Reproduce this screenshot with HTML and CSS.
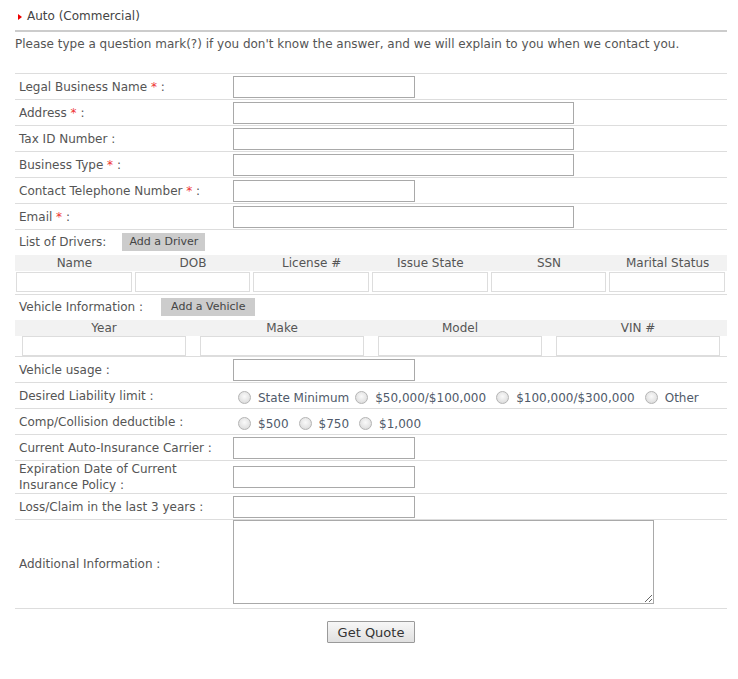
FILE: index.html
```html
<!DOCTYPE html>
<html lang="en">
<head>
<meta charset="utf-8">
<title>Auto (Commercial)</title>
<link rel="stylesheet" href="styles.css">
</head>
<body>
<div class="page">
  <div class="title"><span class="arrow"></span>Auto (Commercial)</div>
  <p class="note">Please type a question mark(?) if you don't know the answer, and we will explain to you when we contact you.</p>
  <form class="form">
    <div class="row"><div class="label">Legal Business Name <span class="req">*</span> :</div><div class="field"><input class="in short" type="text"></div></div>
    <div class="row"><div class="label">Address <span class="req">*</span> :</div><div class="field"><input class="in long" type="text"></div></div>
    <div class="row"><div class="label">Tax ID Number :</div><div class="field"><input class="in long" type="text"></div></div>
    <div class="row"><div class="label">Business Type <span class="req">*</span> :</div><div class="field"><input class="in long" type="text"></div></div>
    <div class="row"><div class="label">Contact Telephone Number <span class="req">*</span> :</div><div class="field"><input class="in short" type="text"></div></div>
    <div class="row"><div class="label">Email <span class="req">*</span> :</div><div class="field"><input class="in long" type="text"></div></div>

    <div class="block drivers">
      <div class="block-head"><span>List of Drivers:</span><button type="button" class="add">Add a Driver</button></div>
      <div class="thead six"><div>Name</div><div>DOB</div><div>License #</div><div>Issue State</div><div>SSN</div><div>Marital Status</div></div>
      <div class="tin six"><input type="text"><input type="text"><input type="text"><input type="text"><input type="text"><input type="text"></div>
    </div>

    <div class="block vehicles">
      <div class="block-head"><span>Vehicle Information :</span><button type="button" class="add wide">Add a Vehicle</button></div>
      <div class="thead four"><div>Year</div><div>Make</div><div>Model</div><div>VIN #</div></div>
      <div class="tin four"><input type="text"><input type="text"><input type="text"><input type="text"></div>
    </div>

    <div class="row"><div class="label">Vehicle usage :</div><div class="field"><input class="in short" type="text"></div></div>
    <div class="row"><div class="label">Desired Liability limit :</div>
      <div class="field radios">
        <label class="opt"><input type="radio" name="liab">State Minimum</label>
        <label class="opt tight"><input type="radio" name="liab">$50,000/$100,000</label>
        <label class="opt"><input type="radio" name="liab">$100,000/$300,000</label>
        <label class="opt"><input type="radio" name="liab">Other</label>
      </div>
    </div>
    <div class="row"><div class="label">Comp/Collision deductible :</div>
      <div class="field radios">
        <label class="opt"><input type="radio" name="ded">$500</label>
        <label class="opt"><input type="radio" name="ded">$750</label>
        <label class="opt"><input type="radio" name="ded">$1,000</label>
      </div>
    </div>
    <div class="row"><div class="label">Current Auto-Insurance Carrier :</div><div class="field"><input class="in short" type="text"></div></div>
    <div class="row"><div class="label">Expiration Date of Current Insurance Policy :</div><div class="field"><input class="in short" type="text"></div></div>
    <div class="row"><div class="label">Loss/Claim in the last 3 years :</div><div class="field"><input class="in short" type="text"></div></div>
    <div class="row"><div class="label">Additional Information :</div><div class="field"><textarea class="ta"></textarea></div></div>

    <div class="actions"><button type="button" class="submit">Get Quote</button></div>
  </form>
</div>
</body>
</html>
```

FILE: styles.css
```css
body {
  margin: 0;
  background: #fff;
  font-family: "DejaVu Sans", Verdana, sans-serif;
  font-size: 12px;
  color: #555;
}

.page {
  width: 712px;
  margin-left: 15px;
}

.title {
  display: flex;
  align-items: center;
  padding: 8px 0 6px;
  line-height: 16px;
  color: #444;
  border-bottom: 2px solid #ccc;
}

.arrow {
  width: 0;
  height: 0;
  border-left: 4px solid #e00;
  border-top: 3px solid transparent;
  border-bottom: 3px solid transparent;
  margin: 1px 5px 0 3px;
}

.note {
  margin: 4px 0 21px;
  line-height: 16px;
}

.form {
  margin: 0;
  border-top: 1px solid #ddd;
}

.row {
  display: flex;
  align-items: center;
  min-height: 25px;
  border-bottom: 1px solid #ddd;
}

.label {
  flex: none;
  width: 214px;
  padding-left: 4px;
  line-height: 16px;
}

.req {
  color: #e33;
}

.field {
  flex: 1;
  min-width: 0;
}

.in {
  display: block;
  box-sizing: border-box;
  height: 22px;
  margin: 0;
  padding: 1px 3px;
  border: 1px solid #a9a9a9;
  font: inherit;
  background: #fff;
}

.short {
  width: 182px;
}

.long {
  width: 341px;
}

.block {
  border-bottom: 1px solid #ddd;
  padding-top: 3px;
}

.drivers {
  padding-bottom: 2px;
}

.block-head {
  display: flex;
  align-items: center;
  height: 18px;
  padding-left: 4px;
}

.add {
  height: 18px;
  margin-left: 16px;
  padding: 0 7px;
  border: 0;
  background: #ccc;
  color: #444;
  font-family: "DejaVu Sans", Verdana, sans-serif;
  font-size: 11px;
  line-height: 18px;
}

.add.wide {
  margin-left: 18px;
  padding: 0 10px;
}

.thead {
  display: grid;
  margin-top: 4px;
  background: #f2f2f2;
  line-height: 16px;
  text-align: center;
}

.tin {
  display: grid;
}

.six {
  grid-template-columns: repeat(6, 1fr);
}

.four {
  grid-template-columns: repeat(4, 1fr);
}

.tin input {
  box-sizing: border-box;
  height: 20px;
  padding: 1px 3px;
  border: 1px solid #ddd;
  font: inherit;
  background: #fff;
}

.drivers .tin {
  margin-top: 1px;
}

.drivers .tin input {
  width: calc(100% - 3px);
  margin: 0 1px;
}

.vehicles .tin input {
  width: calc(100% - 14px);
  margin: 0 7px;
}

.radios {
  display: flex;
  align-items: center;
  padding-top: 4px;
  line-height: 16px;
  color: #505a6a;
}

.opt {
  display: flex;
  align-items: center;
}

.opt + .opt {
  margin-left: 5px;
}

.opt.tight {
  margin-left: 1px;
}

.opt input {
  -webkit-appearance: none;
  appearance: none;
  flex: none;
  box-sizing: border-box;
  width: 13px;
  height: 13px;
  margin: 0 7px 0 5px;
  border: 1px solid #b4b4b4;
  border-radius: 50%;
  background: radial-gradient(circle at 50% 40%, #fafafa 0, #e4e4e4 60%, #d2d2d2 100%);
}

.ta {
  display: block;
  box-sizing: border-box;
  width: 421px;
  height: 84px;
  margin: 0 0 4px;
  border: 1px solid #a9a9a9;
  font: inherit;
  resize: both;
}

.actions {
  padding-top: 12px;
  text-align: center;
}

.submit {
  box-sizing: border-box;
  width: 88px;
  height: 22px;
  padding: 0;
  border: 1px solid #9a9a9a;
  border-radius: 1px;
  background: linear-gradient(#f7f7f7, #e0e0e0);
  color: #333;
  font-family: "DejaVu Sans", Verdana, sans-serif;
  font-size: 13px;
}
```
